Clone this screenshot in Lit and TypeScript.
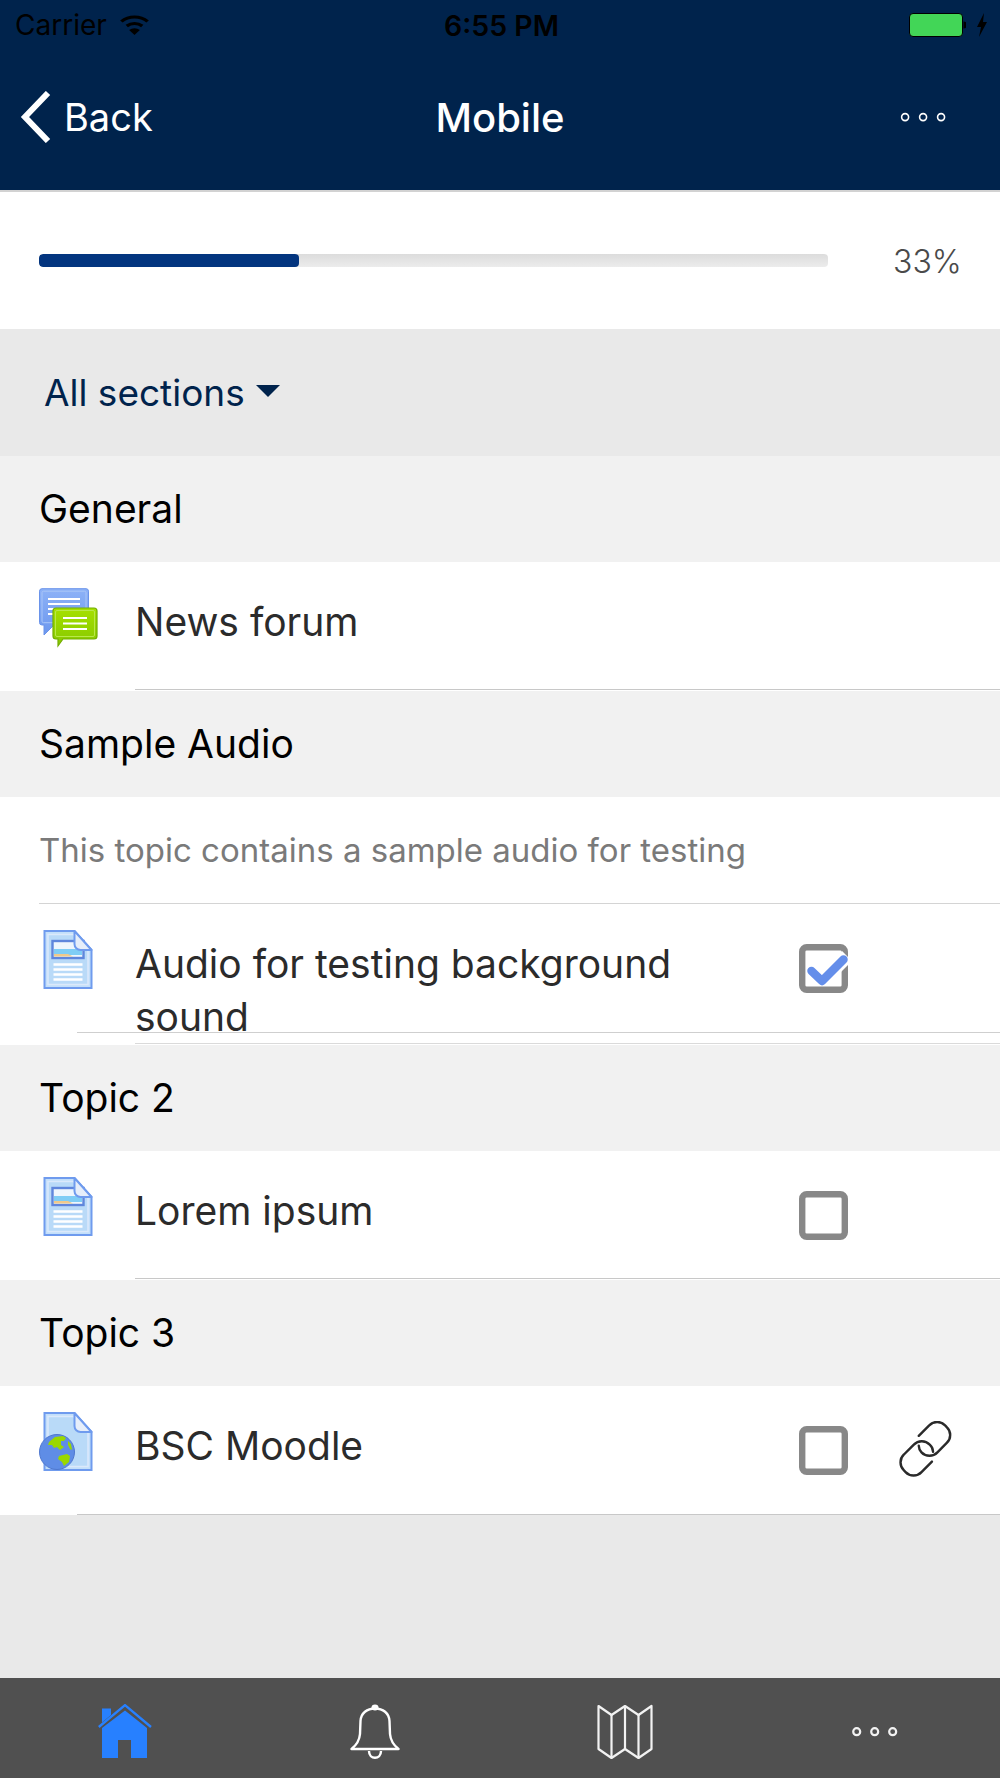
import { LitElement, html, css, svg } from "lit";
import { customElement } from "lit/decorators.js";

const forumIcon = html`<svg class="ic" viewBox="0 0 60 60" width="60" height="60">
  <defs>
    <linearGradient id="fb" x1="0" y1="0" x2="0" y2="1"><stop offset="0" stop-color="#8db2f7"/><stop offset="1" stop-color="#6c97ee"/></linearGradient>
    <linearGradient id="fg" x1="0" y1="0" x2="0" y2="1"><stop offset="0" stop-color="#a6e000"/><stop offset="1" stop-color="#86c800"/></linearGradient>
  </defs>
  <path d="M3 .7H47A2.500 2.500 0 0 1 49.500 3.200V34.500A2.500 2.500 0 0 1 47 37H15L5 47V37H3A2.500 2.500 0 0 1 .5 34.500V3.200A2.500 2.500 0 0 1 3 .7z" fill="url(#fb)" stroke="#6a93ea"/>
  <rect x="3" y="3.200" width="44" height="31.500" rx="1.500" fill="none" stroke="#a9c5f7" stroke-width="1"/>
  <path d="M9 11h32M9 16h32M9 21h32M9 26h32" stroke="#fff" stroke-width="2"/>
  <path d="M17 20H55A3 3 0 0 1 58 23V48A3 3 0 0 1 55 51H24L19 58V51H17A3 3 0 0 1 14 48V23A3 3 0 0 1 17 20z" fill="url(#fg)" stroke="#73ad00" stroke-width="1.200"/>
  <rect x="16.500" y="22.500" width="39" height="26" rx="1.500" fill="none" stroke="#b9e84a" stroke-width="1"/>
  <path d="M24 30h24M24 35.500h24M24 41h24" stroke="#fff" stroke-width="2"/>
</svg>`;

const pageBase = svg`<path d="M1 1H31L48 20V58H1z" fill="#c3dffa" stroke="#6f9bee" stroke-width="2"/>
  <path d="M4.500 4.500H30L44.500 21V54.500H4.500z" fill="#b9daf8" stroke="#dbe9fb" stroke-width="1.500"/>`;
const pageFold = svg`<path d="M31 1V14a6 6 0 0 0 6 6H48z" fill="#e6eefa" stroke="#6f9bee" stroke-width="2" stroke-linejoin="round"/>`;

const pageIcon = html`<svg class="ic" viewBox="0 0 60 60" width="60" height="60">
  <g transform="translate(4.500 0)">
    ${pageBase}
    <rect x="9" y="11" width="31" height="17" fill="#eef6fd" stroke="#5f86dc" stroke-width="2.400"/>
    <rect x="10.500" y="19" width="28" height="6" fill="#7fcdf5"/>
    <path d="M10.500 26.500h19l-5-2.500h-14z" fill="#f0c98a"/>
    ${pageFold}
    <path d="M10 34.500h29M10 39.500h29M10 44.500h29M10 49.500h29" stroke="#fff" stroke-width="2.600"/>
  </g>
</svg>`;

const urlIcon = html`<svg class="ic" viewBox="0 0 60 60" width="60" height="60">
  <g transform="translate(4.500 0)">
    ${pageBase}
    ${pageFold}
  </g>
  <circle cx="18" cy="40" r="17.500" fill="#5f8de6" stroke="#4f78cf" stroke-width="1"/>
  <path d="M10 30l6-5 8-1 3 2-2 3-3 0 0 4 3 2-4 3-3-3-3 1-2-3-4 0z" fill="#9ad800"/>
  <path d="M20 44l8-2 3 2-1 6-5 4-2-4-4-3z" fill="#9ad800"/>
  <path d="M29 29l3 3 1 6-2-1-2-4z" fill="#9ad800"/>
</svg>`;

const boxIcon = (checked: boolean) => html`<svg class="box" viewBox="0 0 50 50" width="50" height="50">
  <rect x="3.200" y="3.200" width="42.600" height="42.600" rx="4.500" fill="#fff" stroke="#888" stroke-width="6.400"/>
  ${checked
    ? svg`<path d="M30 30L48 12" fill="none" stroke="#fff" stroke-width="14"/>
          <path d="M12.500 27L23 37L44.500 15.500" fill="none" stroke="#648eea" stroke-width="8.500" stroke-linecap="round" stroke-linejoin="round"/>`
    : null}
</svg>`;

const linkIcon = html`<svg class="link" viewBox="4 3 51 51" width="56" height="56" fill="none" stroke="#2a2a2a" stroke-width="2.200" stroke-linecap="round">
  <path d="M22 16.500L31.500 7a10 10 0 0 1 14.500 0l1.500 1.500a10 10 0 0 1 0 14.500L39 31.500a10 10 0 0 1-14.500 0 9 9 0 0 1-2.500-6"/>
  <path d="M34 40L24.500 49.500a10 10 0 0 1-14.500 0L8.500 48a10 10 0 0 1 0-14.500L17.500 24.500a10 10 0 0 1 14.500 0 9 9 0 0 1 3 6.500"/>
</svg>`;

type Item = { title: string; icon: unknown; box?: boolean; checked?: boolean; link?: boolean; tall?: boolean; short?: boolean };
type Section = { name: string; desc?: string; items: Item[] };

const sections: Section[] = [
  { name: "General", items: [{ title: "News forum", icon: forumIcon }] },
  {
    name: "Sample Audio",
    desc: "This topic contains a sample audio for testing",
    items: [{ title: "Audio for testing background sound", icon: pageIcon, box: true, checked: true, tall: true, short: true }],
  },
  { name: "Topic 2", items: [{ title: "Lorem ipsum", icon: pageIcon, box: true }] },
  { name: "Topic 3", items: [{ title: "BSC Moodle", icon: urlIcon, box: true, link: true, short: true }] },
];

@customElement("app-root")
export class AppRoot extends LitElement {
  static styles = css`
    :host {
      display: flex;
      flex-direction: column;
      width: 1000px;
      height: 1778px;
      overflow: hidden;
      background: #e9e9e9;
      font-family: Inter, "Liberation Sans", sans-serif;
    }
    .header {
      height: 190px;
      background: #00234c;
      border-bottom: 2px solid #d2d2d2;
      display: flex;
      flex-direction: column;
      flex: none;
    }
    .status {
      height: 50px;
      flex: none;
      display: grid;
      grid-template-columns: 1fr auto 1fr;
      align-items: center;
      padding: 0 12px 0 15px;
      color: #000;
      font-size: 28px;
    }
    .status-left { display: flex; align-items: center; gap: 12px; }
    .time { font-weight: 600; font-size: 28.5px; }
    .status-right { display: flex; justify-content: flex-end; align-items: center; gap: 10px; }
    .nav {
      flex: 1;
      display: grid;
      grid-template-columns: 1fr auto 1fr;
      align-items: center;
      color: #fff;
      padding: 0 20px 6px;
    }
    .back { display: flex; align-items: center; gap: 13px; font-size: 38px; }
    .title { font-weight: 500; font-size: 40px; }
    .more { display: flex; justify-content: flex-end; padding-right: 34px; }
    .progress {
      height: 137px;
      flex: none;
      background: #fff;
      display: flex;
      align-items: center;
      padding: 0 39px;
      gap: 65px;
    }
    .track {
      flex: 1;
      height: 13px;
      border-radius: 4px;
      background: linear-gradient(#dcdcdc, #ececec);
      overflow: hidden;
    }
    .fill { height: 100%; border-radius: 4px; background: #03357f; }
    .pct { font-size: 32px; color: #4a4a4a; font-weight: 300; width: 68px; text-align: right; padding-top: 2px; }
    .select {
      height: 127px;
      flex: none;
      display: flex;
      align-items: center;
      gap: 11px;
      padding-left: 44px;
      color: #00234c;
      font-size: 37px;
    }
    .caret {
      width: 0;
      height: 0;
      border-left: 12px solid transparent;
      border-right: 12px solid transparent;
      border-top: 12px solid #00234c;
      margin-bottom: 4px;
    }
    .sec-title {
      height: 106px;
      box-sizing: border-box;
      background: #f1f1f1;
      color: #000;
      font-size: 39px;
      display: flex;
      align-items: center;
      padding: 0 0 2px 39px;
    }
    .desc {
      height: 107px;
      margin: 0;
      box-sizing: border-box;
      background: #fff;
      color: #7a7a7a;
      font-size: 33px;
      display: flex;
      align-items: center;
      padding: 0 0 2px 39px;
      position: relative;
    }
    .desc::after {
      content: "";
      position: absolute;
      left: 39px;
      right: 0;
      bottom: 0;
      height: 1px;
      background: #d4d4d4;
    }
    .row {
      position: relative;
      height: 129px;
      background: #fff;
      display: grid;
      grid-template-columns: 96px 1fr 50px 106px;
      align-items: start;
      padding-left: 39px;
      padding-right: 45px;
      box-sizing: border-box;
    }
    .row.tall { height: 141px; }
    .row::after {
      content: "";
      position: absolute;
      left: 135px;
      right: 0;
      bottom: 1px;
      height: 1px;
      background: #c8c8c8;
    }
    .row.short::after { left: 77px; bottom: 0; }
    .row.tall::after { left: 135px; bottom: 1px; background: #dadada; }
    .row.tall::before {
      content: "";
      position: absolute;
      left: 77px;
      right: 0;
      top: 128px;
      height: 1px;
      background: #cfcfcf;
      z-index: 1;
    }
    .ic { display: block; margin-top: 26px; }
    .name {
      grid-column: 2;
      margin-top: 33px;
      font-size: 39px;
      line-height: 53px;
      color: #2b2b2b;
      padding-right: 60px;
    }
    .box { display: block; margin-top: 40px; grid-column: 3; }
    .link { display: block; margin-top: 35px; grid-column: 4; margin-left: 50px; }
    .tabs {
      margin-top: auto;
      height: 100px;
      box-sizing: border-box;
      padding-top: 8px;
      flex: none;
      background: #505050;
      display: grid;
      grid-template-columns: repeat(4, 1fr);
      align-items: center;
      justify-items: center;
    }
    .tabs svg { display: block; }
  `;

  private dots(r: number, gap: number, sw: number, color: string) {
    const w = gap * 2 + (r + sw) * 2;
    const c = r + sw;
    return html`<svg width=${w} height=${c * 2} viewBox="0 0 ${w} ${c * 2}" fill="none" stroke=${color} stroke-width=${sw}>
      <circle cx=${c} cy=${c} r=${r}></circle>
      <circle cx=${c + gap} cy=${c} r=${r}></circle>
      <circle cx=${c + gap * 2} cy=${c} r=${r}></circle>
    </svg>`;
  }

  render() {
    return html`
      <header class="header">
        <div class="status">
          <div class="status-left">
            <span>Carrier</span>
            <svg width="31" height="22" viewBox="0 0 26 22" preserveAspectRatio="none" fill="none" stroke="#000" stroke-width="3">
              <path d="M2 7.500a16 16 0 0 1 22 0"></path>
              <path d="M6.500 12a10 10 0 0 1 13 0"></path>
              <path d="M13 21l-4.500-5a6.500 6.500 0 0 1 9 0z" fill="#000" stroke="none"></path>
            </svg>
          </div>
          <div class="time">6:55 PM</div>
          <div class="status-right">
            <svg width="57" height="24" viewBox="0 0 57 24">
              <rect x="0.500" y="0.500" width="53" height="23" rx="3.500" fill="#42d657" stroke="#000"></rect>
              <path d="M54.500 8.500a3 3 0 0 1 0 7z" fill="#000"></path>
            </svg>
            <svg width="12" height="24" viewBox="0 0 12 24"><path d="M8 0L1 14h4l-2 10 8-15H7z" fill="#000"></path></svg>
          </div>
        </div>
        <div class="nav">
          <div class="back">
            <svg width="31" height="52" viewBox="0 0 31 52" fill="none" stroke="#fff" stroke-width="6"><path d="M28 2L5 26l23 24"></path></svg>
            <span>Back</span>
          </div>
          <div class="title">Mobile</div>
          <div class="more">${this.dots(3.5, 18, 1.6, "#fff")}</div>
        </div>
      </header>
      <div class="progress">
        <div class="track"><div class="fill" style="width:33%"></div></div>
        <div class="pct">33%</div>
      </div>
      <div class="select"><span>All sections</span><span class="caret"></span></div>
      ${sections.map(
        (s) => html`
          <section>
            <div class="sec-title">${s.name}</div>
            ${s.desc ? html`<p class="desc">${s.desc}</p>` : null}
            ${s.items.map(
              (i) => html`<div class="row ${i.tall ? "tall" : ""} ${i.short ? "short" : ""}">
                ${i.icon}
                <div class="name">${i.title}</div>
                ${i.box ? boxIcon(!!i.checked) : null}
                ${i.link ? linkIcon : null}
              </div>`
            )}
          </section>
        `
      )}
      <nav class="tabs">
        <svg width="54" height="56" viewBox="0 0 54 56">
          <path d="M4 24L27 6.500 49 24V54H33V36H20V54H4z" fill="#2780ff"></path>
          <path d="M4 4.500H13V11L4 18.500z" fill="#2780ff"></path>
          <path d="M.8 23L27 1.200 53 23" fill="none" stroke="#2780ff" stroke-width="2.400"></path>
        </svg>
        <svg width="50" height="56" viewBox="0 0 50 56" fill="none" stroke="#fff" stroke-width="2.400">
          <ellipse cx="25" cy="3.500" rx="3.500" ry="3" fill="#fff" stroke="none"></ellipse>
          <path d="M1.500 45c5-4 8-9 8.500-15l.5-13C11 9 17 4.500 25 4.500S39 9 39.500 17l.5 13c.5 6 3.500 11 8.500 15z" stroke-linejoin="round"></path>
          <path d="M19 47c0 9 12 9 12 0"></path>
        </svg>
        <svg width="56" height="56" viewBox="0 0 56 56" fill="none" stroke="#f2f2f2" stroke-width="2.200" stroke-linejoin="round">
          <path d="M1.500 2L14.500 11 28 2 41.500 11 54.500 2V45L41.500 54 28 45 14.500 54 1.500 45z"></path>
          <path d="M14.500 11V54M28 2V45M41.500 11V54"></path>
        </svg>
        ${this.dots(3.5, 18, 2.2, "#f2f2f2")}
      </nav>
    `;
  }
}
